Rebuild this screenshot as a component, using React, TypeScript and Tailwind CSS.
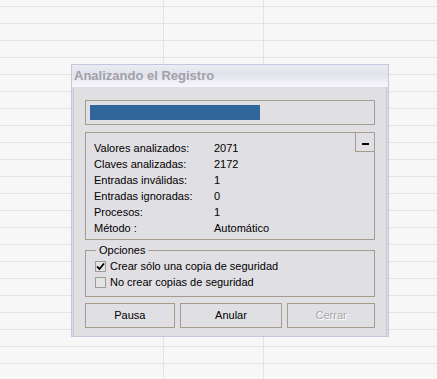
import React from 'react'

const stats = [
  ['Valores analizados:', '2071'],
  ['Claves analizadas:', '2172'],
  ['Entradas inválidas:', '1'],
  ['Entradas ignoradas:', '0'],
  ['Procesos:', '1'],
  ['Método :', 'Automático'],
]

const Checkbox = ({ checked }: { checked?: boolean }) => (
  <span className="flex h-[11px] w-[11px] items-center justify-center border border-[#9c9a94] bg-[#e4e3e6]">
    {checked && (
      <svg width="9" height="9" viewBox="0 0 9 9">
        <path d="M1 4.5 L3.5 7 L8 1.5" stroke="#000" strokeWidth="1.8" fill="none" />
      </svg>
    )}
  </span>
)

export default function App() {
  return (
    <div
      className="h-[379px] w-[437px] overflow-hidden bg-[#f7f7f7] bg-[linear-gradient(to_right,transparent_163px,#e2e2e8_163px,#e2e2e8_164px,transparent_164px,transparent_263px,#e2e2e8_263px,#e2e2e8_264px,transparent_264px),repeating-linear-gradient(to_bottom,transparent_0px,transparent_6px,#e2e2e8_6px,#e2e2e8_7px,transparent_7px,transparent_17px)] pt-[64px] pl-[71px]"
      style={{ fontFamily: '"Liberation Sans", Arial, sans-serif' }}
    >
      {/* dialog window */}
      <div className="w-[318px] border border-[#c6c6dc] bg-[#e0dfe3]">
        {/* title bar */}
        <div className="flex h-[22px] items-center bg-[linear-gradient(to_bottom,#ececf2,#e2e2ec_40%,#f6f6fb)] pl-[2px] text-[13px] font-bold text-[#a0a0a8]">
          Analizando el Registro
        </div>

        <div className="mx-[1px] border-x border-[#c8c8d8] px-[11px] pt-[13px] pb-[8px] text-[11px] text-black">
          {/* progress */}
          <div className="h-[25px] border border-[#a59c89] p-[4px]">
            <div className="h-full w-[170px] bg-[#31669a]" />
          </div>

          {/* stats */}
          <div className="relative mt-[7px] h-[108px] border border-[#a59c89] pt-[7px] pl-[8px]">
            <div className="absolute top-[-1px] right-[-1px] flex h-[20px] w-[20px] items-end justify-center border border-[#a59c89] pb-[6px]">
              <span className="h-[2px] w-[7px] bg-black" />
            </div>
            {stats.map(([k, v]) => (
              <div key={k} className="flex h-[16px] items-center">
                <span className="w-[120px]">{k}</span>
                <span>{v}</span>
              </div>
            ))}
          </div>

          {/* options */}
          <fieldset className="mt-[4px] h-[53px] border border-[#a59c89] px-[9px] pt-[1px]">
            <legend className="ml-[1px] px-[3px] leading-[13px]">Opciones</legend>
            <label className="flex h-[16px] items-center gap-[4px]">
              <Checkbox checked />
              <span>Crear sólo una copia de seguridad</span>
            </label>
            <label className="flex h-[16px] items-center gap-[4px]">
              <Checkbox />
              <span>No crear copias de seguridad</span>
            </label>
          </fieldset>

          {/* buttons */}
          <div className="mt-[6px] flex gap-[5px]">
            <button className="h-[25px] w-[91px] border border-[#a59c89]">Pausa</button>
            <button className="h-[25px] w-[104px] border border-[#a59c89]">Anular</button>
            <button className="h-[25px] w-[89px] border border-[#a59c89] text-[#a7a7a7] [text-shadow:1px_1px_0_#ffffff]">
              Cerrar
            </button>
          </div>
        </div>
      </div>
    </div>
  )
}
